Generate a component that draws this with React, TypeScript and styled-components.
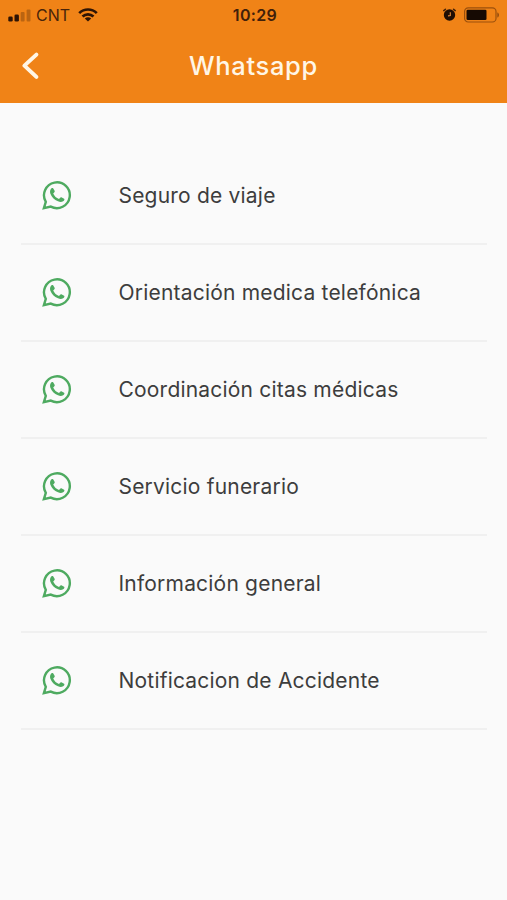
import React from 'react';
import styled, { createGlobalStyle } from 'styled-components';

const GlobalStyle = createGlobalStyle`
  * { box-sizing: border-box; }
  body { margin: 0; background: #fafafa; font-family: Inter, "Liberation Sans", sans-serif; }
`;

const Screen = styled.div`
  min-height: 900px;
  background: #fafafa;
`;

const Header = styled.header`
  height: 103px;
  background: #f08317;
`;

const StatusBar = styled.div`
  height: 30px;
  padding: 0 7px 0 8px;
  display: grid;
  grid-template-columns: 1fr auto 1fr;
  align-items: center;
  color: #2e1405;
`;

const StatusGroup = styled.div<{ $end?: boolean }>`
  display: flex;
  align-items: center;
  justify-content: ${({ $end }) => ($end ? 'flex-end' : 'flex-start')};
  gap: ${({ $end }) => ($end ? '7px' : '0')};

  svg { display: block; flex: none; }
`;

const Carrier = styled.span`
  color: #49240a;
  font-size: 16px;
  line-height: 20px;
  margin: 0 8px 0 5px;
`;

const Clock = styled.time`
  padding-left: 2px;
  color: #40200a;
  font-size: 16px;
  line-height: 20px;
  font-weight: 600;
  letter-spacing: 0.35px;
`;

const NavBar = styled.div`
  height: 73px;
  display: grid;
  grid-template-columns: 60px 1fr 60px;
  align-items: center;
`;

const BackButton = styled.button`
  width: 60px;
  height: 60px;
  padding: 0 0 2px 20px;
  border: 0;
  background: none;
  display: flex;
  align-items: center;
`;

const Title = styled.h1`
  margin: 0 0 2px;
  text-align: center;
  color: #fff6e6;
  font-size: 25.5px;
  line-height: 34px;
  font-weight: 500;
  letter-spacing: 0.65px;
`;

const List = styled.ul`
  list-style: none;
  margin: 0;
  padding: 45px 20px 0 21px;
`;

const Row = styled.li`
  height: 97px;
  padding-left: 21px;
  display: flex;
  align-items: center;
  gap: 45.5px;
  border-bottom: 2px solid #f0f0f0;
`;

const Label = styled.span`
  color: #3d3d3d;
  font-size: 21px;
  line-height: 30px;
  letter-spacing: 0.2px;
  white-space: nowrap;
`;

const services = [
  'Seguro de viaje',
  'Orientación medica telefónica',
  'Coordinación citas médicas',
  'Servicio funerario',
  'Información general',
  'Notificacion de Accidente',
];

const SignalIcon = () => (
  <svg width="23" height="13" viewBox="0 0 23 13" fill="currentColor">
    <rect x="0.3" y="7.5" width="4.4" height="5" rx="1.3" />
    <rect x="6.5" y="5.5" width="4.4" height="7" rx="1.3" />
    <rect x="12.7" y="3" width="3.9" height="9.5" rx="1" opacity=".28" />
    <rect x="18.6" y="0.5" width="3.9" height="12" rx="1" opacity=".28" />
  </svg>
);

const WifiIcon = () => (
  <svg width="20" height="14" viewBox="0 0 20 14" fill="none" stroke="currentColor" strokeWidth="2.7">
    <path d="M1.2 5.1C6.2.3 13.8.3 18.8 5.1" />
    <path d="M4.5 8.5c3.2-2.9 7.8-2.9 11 0" />
    <path d="M10 13.6 6.8 10.5c1.8-1.7 4.6-1.7 6.4 0Z" fill="currentColor" stroke="none" />
  </svg>
);

const AlarmIcon = () => (
  <svg width="14" height="14" viewBox="0 0 14 14" fill="none">
    <circle cx="6.5" cy="7" r="5.7" fill="#1f0e04" />
    <path d="M.8 2.6 2.4 1.3M12.2 2.6l-1.6-1.3" stroke="#4a250a" strokeWidth="1.6" strokeLinecap="round" />
    <path d="M7.3 4.3V7.6L5 7.9" stroke="#e58b38" strokeWidth="1.1" />
  </svg>
);

const BatteryIcon = () => (
  <svg width="36" height="16" viewBox="0 0 36 16" fill="none">
    <rect x=".6" y=".8" width="31.4" height="14.2" rx="3.6" stroke="#9b500d" strokeWidth="1.2" />
    <rect x="2.5" y="2.7" width="20" height="10.4" rx="1.3" fill="#160a03" />
    <path d="M33.4 5.4c2 .6 2 4.4 0 5Z" fill="#8b460c" />
  </svg>
);

const BackIcon = () => (
  <svg width="20" height="30" viewBox="0 0 20 30" fill="none" stroke="#fff6e6" strokeWidth="4">
    <path d="M16.4 3.6 4.4 14.6l12 11.3" strokeLinecap="round" strokeLinejoin="round" />
  </svg>
);

const WhatsappIcon = () => (
  <svg width="31" height="31" viewBox="0 0 31 31" fill="none">
    <path
      d="M1.9 28.2 3.8 21.8A12.9 12.9 0 1 1 8.8 26.6Z"
      stroke="#4eaa60"
      strokeWidth="2.4"
    />
    <path
      d="M8.7 9.2C9.3 7.9 10.5 7.5 11.3 8.4L12.6 10.8C13.1 11.7 12.4 12.3 11.2 13.5C12.4 16.2 14.4 18 17 19C18.4 17.5 18.9 17.1 19.8 17.5L22.1 18.8C22.9 19.4 22.2 20.6 21.1 21.3C19.6 22.2 17.7 22 16 21.3C12.3 19.9 9.5 17 8.4 13.8C7.8 12.1 8 10.4 8.7 9.2Z"
      fill="#4eaa60"
    />
  </svg>
);

export default function App() {
  return (
    <Screen>
      <GlobalStyle />
      <Header>
        <StatusBar>
          <StatusGroup>
            <SignalIcon />
            <Carrier>CNT</Carrier>
            <WifiIcon />
          </StatusGroup>
          <Clock>10:29</Clock>
          <StatusGroup $end>
            <AlarmIcon />
            <BatteryIcon />
          </StatusGroup>
        </StatusBar>
        <NavBar>
          <BackButton aria-label="Atrás">
            <BackIcon />
          </BackButton>
          <Title>Whatsapp</Title>
        </NavBar>
      </Header>
      <List>
        {services.map((service) => (
          <Row key={service}>
            <WhatsappIcon />
            <Label>{service}</Label>
          </Row>
        ))}
      </List>
    </Screen>
  );
}
